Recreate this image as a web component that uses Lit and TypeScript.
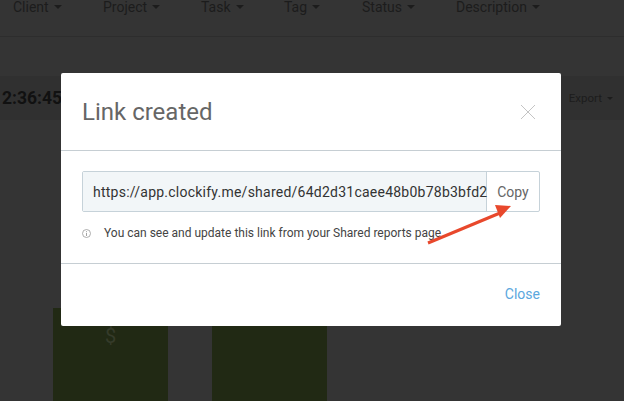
import { LitElement, html, css, svg } from "lit";
import { customElement } from "lit/decorators.js";

const filters: [string, number][] = [
  ["Client", 90],
  ["Project", 98],
  ["Task", 83],
  ["Tag", 78],
  ["Status", 94],
  ["Description", 90],
];

@customElement("app-root")
export class AppRoot extends LitElement {
  static styles = css`
    :host {
      display: block;
      width: 624px;
      height: 401px;
      position: relative;
      overflow: hidden;
      background: #343434;
      font-family: Roboto, "Liberation Sans", sans-serif;
    }
    .filters {
      display: flex;
      height: 37px;
      box-sizing: border-box;
      padding-left: 13px;
      border-bottom: 1px solid #2d2d2d;
      margin-bottom: 39px;
      overflow: hidden;
    }
    .filter {
      display: flex;
      align-items: center;
      gap: 5px;
      height: 13px;
      font-size: 14px;
      color: #1c1c1c;
      flex: none;
    }
    .caret {
      width: 0;
      height: 0;
      border-left: 4px solid transparent;
      border-right: 4px solid transparent;
      border-top: 4px solid #1c1c1c;
    }
    .caret.small {
      border-left-width: 3px;
      border-right-width: 3px;
      border-top-width: 3px;
    }
    .summary {
      height: 44px;
      background: #303030;
      display: flex;
      align-items: center;
      justify-content: space-between;
      padding: 0 11px 0 2px;
      margin-bottom: 188px;
    }
    .time {
      font-size: 17.5px;
      font-weight: 700;
      color: #111;
    }
    .export {
      display: flex;
      align-items: center;
      gap: 5px;
      font-size: 11.5px;
      color: #1c1c1c;
    }
    .bars {
      display: flex;
      gap: 44px;
      padding-left: 53px;
    }
    .bar {
      width: 115px;
      height: 93px;
      background: #212914;
      display: flex;
      justify-content: center;
      color: #353b2a;
      font-size: 20px;
      padding-top: 16px;
      box-sizing: border-box;
    }
    .modal {
      position: absolute;
      left: 61px;
      top: 73px;
      width: 500px;
      height: 253px;
      background: #fff;
      border-radius: 2px;
      display: flex;
      flex-direction: column;
      box-sizing: border-box;
    }
    .head {
      height: 78px;
      box-sizing: border-box;
      border-bottom: 1px solid #c6ced3;
      display: flex;
      align-items: center;
      justify-content: space-between;
      padding: 0 25px 0 21px;
    }
    h2 {
      margin: 0;
      font-size: 24px;
      font-weight: 400;
      color: #666;
    }
    .close-x {
      display: block;
      width: 16px;
      height: 16px;
    }
    .body {
      height: 113px;
      box-sizing: border-box;
      border-bottom: 1px solid #c6ced3;
      padding: 20px 21px 0;
    }
    .group {
      display: flex;
      height: 41px;
      box-sizing: border-box;
      border: 1px solid #c6d2d9;
      border-radius: 2px;
    }
    .url {
      flex: 1;
      min-width: 0;
      background: #f2f6f8;
      display: flex;
      align-items: center;
      padding-left: 10px;
      font-size: 14px;
      color: #333;
      border-right: 1px solid #c6d2d9;
      white-space: nowrap;
      letter-spacing: 0.24px;
    }
    .copy {
      width: 52px;
      display: flex;
      align-items: center;
      justify-content: center;
      font-size: 14px;
      color: #666;
    }
    .hint {
      display: flex;
      align-items: center;
      gap: 13px;
      margin-top: 14px;
      font-size: 12px;
      color: #444;
    }
    .info {
      display: block;
      width: 9px;
      height: 9px;
    }
    .foot {
      flex: 1;
      display: flex;
      align-items: center;
      justify-content: flex-end;
      padding: 0 21px 2px;
      font-size: 14px;
      color: #5ba7de;
    }
    .arrow {
      position: absolute;
      left: 420px;
      top: 200px;
      width: 100px;
      height: 50px;
    }
  `;

  render() {
    return html`
      <div class="filters">
        ${filters.map(
          ([n, w]) => html`<div class="filter" style="width:${w}px">${n}<span class="caret"></span></div>`
        )}
      </div>
      <div class="summary">
        <span class="time">2:36:45</span>
        <span class="export">Export <span class="caret small"></span></span>
      </div>
      <div class="bars">
        <div class="bar">$</div>
        <div class="bar"></div>
      </div>
      <div class="modal">
        <div class="head">
          <h2>Link created</h2>
          <svg class="close-x" viewBox="0 0 16 16">
            <path d="M1 1L15 15M15 1L1 15" stroke="#c4c4c4" stroke-width="1" fill="none" />
          </svg>
        </div>
        <div class="body">
          <div class="group">
            <div class="url">https://app.clockify.me/shared/64d2d31caee48b0b78b3bfd2</div>
            <div class="copy">Copy</div>
          </div>
          <div class="hint">
            <svg class="info" viewBox="0 0 9 9">
              <circle cx="4.5" cy="4.5" r="4" fill="none" stroke="#999" stroke-width="0.8" />
              <path d="M4.5 4V7M4.5 2.2V3.2" stroke="#999" stroke-width="0.9" />
            </svg>
            You can see and update this link from your Shared reports page
          </div>
        </div>
        <div class="foot">Close</div>
      </div>
      <svg class="arrow" viewBox="0 0 100 50">
        ${svg`<path d="M8 43L80 13" stroke="#e8482c" stroke-width="3" fill="none" />
        <path d="M91 6L75 5L80 18Z" fill="#e8482c" />`}
      </svg>
    `;
  }
}
